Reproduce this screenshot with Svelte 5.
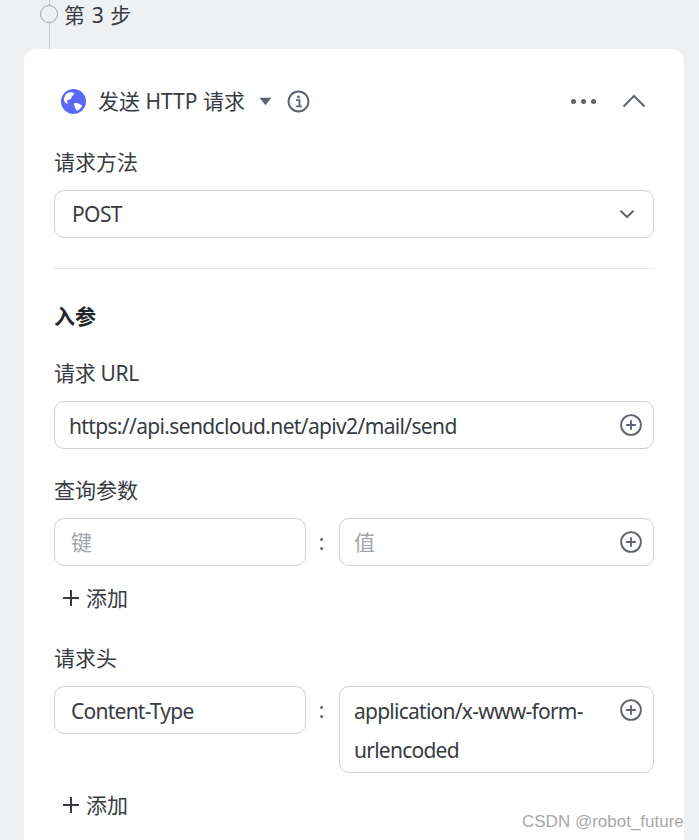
<script>
  const plus = 'M10 5.6v8.8M5.6 10h8.8';
</script>

<div class="page">
  <div class="step">
    <span class="rail"></span>
    <span class="node"></span>
    <span class="step-title">第 3 步</span>
  </div>

  <section class="card">
    <header class="head">
      <svg class="globe" viewBox="0 0 26 26" aria-hidden="true">
        <circle cx="13" cy="13" r="13" fill="#5a68f5" />
        <path d="M7 4c3-1 5.500-1 6.500.5.800 1.500-1 2-2 3-.8 1-.2 2-1.500 2.800-1.500.8-3 .3-3.500 2-.3 1.200 1 2.300.2 3.400C5 15 3 13.500 3 11 3.500 8 4.800 5.500 7 4z" fill="#fff" />
        <path d="M13.500 15c2-1 4-.5 5.500.5 1.500 1 2.500 1.300 3 2-1 2.300-2.800 4-5 5-1.500-.5-1.800-2-2.300-3.300-.5-1.500-2-2.800-1.200-4.200z" fill="#fff" />
      </svg>
      <span class="head-title">发送 HTTP 请求</span>
      <svg class="caret" viewBox="0 0 12 8" aria-hidden="true"><path d="M.5 0.500h11L6 7.500z" fill="#5f6470" /></svg>
      <svg class="info" viewBox="0 0 24 24" aria-hidden="true">
        <circle cx="12" cy="12" r="10.400" fill="none" stroke="#5f6470" stroke-width="2" />
        <circle cx="12" cy="7.200" r="1.500" fill="#5f6470" />
        <path d="M9.500 10.500H13v6M9.500 17h6" fill="none" stroke="#5f6470" stroke-width="1.900" />
      </svg>
      <span class="spacer"></span>
      <span class="dots"><i></i><i></i><i></i></span>
      <svg class="collapse" viewBox="0 0 24 14" aria-hidden="true">
        <path d="M1.500 12.500 12 2l10.500 10.500" fill="none" stroke="#5f6470" stroke-width="2" />
      </svg>
    </header>

    <div class="label first">请求方法</div>
    <div class="box select">
      <span>POST</span>
      <svg class="chev" viewBox="0 0 16 10" aria-hidden="true">
        <path d="M1.500 1.800 8 8l6.500-6.200" fill="none" stroke="#5f6470" stroke-width="2" />
      </svg>
    </div>

    <hr />

    <div class="section">入参</div>

    <div class="label url-label">请求 URL</div>
    <div class="box url">
      <span class="nudge">https://api.sendcloud.net/apiv2/mail/send</span>
      <svg class="add" viewBox="0 0 20 20" aria-hidden="true">
        <circle cx="10" cy="10" r="9" /><path d={plus} />
      </svg>
    </div>

    <div class="label query">查询参数</div>
    <div class="pair">
      <div class="box key placeholder">键</div>
      <span class="colon">:</span>
      <div class="box value placeholder">
        <span>值</span>
        <svg class="add" viewBox="0 0 20 20" aria-hidden="true">
          <circle cx="10" cy="10" r="9" /><path d={plus} />
        </svg>
      </div>
    </div>
    <div class="add-row">
      <svg class="plus" viewBox="0 0 18 18" aria-hidden="true"><path d="M9 1v16M1 9h16" /></svg>
      <span>添加</span>
    </div>

    <div class="label headers">请求头</div>
    <div class="pair">
      <div class="box key"><span class="nudge">Content-Type</span></div>
      <span class="colon">:</span>
      <div class="box value multi">
        <span class="multi-text">application/x-www-form-urlencoded</span>
        <svg class="add" viewBox="0 0 20 20" aria-hidden="true">
          <circle cx="10" cy="10" r="9" /><path d={plus} />
        </svg>
      </div>
    </div>
    <div class="add-row">
      <svg class="plus" viewBox="0 0 18 18" aria-hidden="true"><path d="M9 1v16M1 9h16" /></svg>
      <span>添加</span>
    </div>
  </section>

  <div class="watermark">CSDN @robot_future</div>
</div>

<style>
  :global(body) {
    margin: 0;
    background: #eff0f2;
  }

  .page {
    position: relative;
    width: 699px;
    height: 840px;
    overflow: hidden;
    box-sizing: border-box;
    padding: 0 15px 0 24px;
    font-family: "Noto Sans", "Noto Sans CJK SC", sans-serif;
    font-size: 21px;
    color: #383b42;
    background: #eff0f2;
  }

  .step {
    position: relative;
    height: 49px;
    display: flex;
    align-items: flex-start;
    box-sizing: border-box;
    padding: 1px 0 0 40px;
  }

  .rail {
    position: absolute;
    left: 25px;
    top: 0;
    bottom: 0;
    width: 1px;
    background: #c6c8cc;
  }

  .node {
    position: relative;
    width: 16px;
    height: 16px;
    margin: 4px 0 0 -24px;
    border: 1px solid #a3a6ad;
    border-radius: 50%;
    background: #eff0f2;
    flex: none;
  }

  .step-title {
    margin-left: 6px;
    line-height: 28px;
    letter-spacing: 0.6px;
  }

  .card {
    height: 800px;
    box-sizing: border-box;
    padding: 0 30px;
    border-radius: 12px 12px 0 0;
    background: #fff;
  }

  .head {
    display: flex;
    align-items: center;
    height: 28px;
    padding-top: 38px;
  }

  .globe {
    width: 25px;
    height: 25px;
    margin-left: 7px;
    flex: none;
  }

  .head-title {
    margin-left: 12px;
    line-height: 28px;
  }

  .caret {
    width: 13px;
    height: 9px;
    margin-left: 14px;
  }

  .info {
    width: 23px;
    height: 23px;
    margin-left: 15px;
  }

  .spacer {
    flex: 1;
  }

  .dots {
    display: flex;
    gap: 5px;
  }

  .dots i {
    display: block;
    width: 5px;
    height: 5px;
    border-radius: 50%;
    background: #5f6470;
  }

  .collapse {
    width: 24px;
    height: 14px;
    margin: 0 8px 0 26px;
  }

  .label {
    line-height: 28px;
  }

  .label.first {
    margin-top: 33px;
  }

  .box {
    box-sizing: border-box;
    border: 1px solid #cfd0d4;
    border-radius: 10px;
    background: #fff;
    line-height: 38px;
  }

  .select {
    height: 48px;
    margin-top: 14px;
    padding: 4px 17px;
    display: flex;
    align-items: center;
    justify-content: space-between;
    letter-spacing: -0.6px;
  }

  .chev {
    width: 16px;
    height: 10px;
    margin-right: 1px;
  }

  hr {
    margin: 30px 0 0;
    border: 0;
    border-top: 1px solid #e3e4e7;
  }

  .section {
    margin-top: 33px;
    line-height: 28px;
    font-weight: 700;
    color: #24262b;
  }

  .label.url-label {
    margin-top: 29px;
    letter-spacing: -0.3px;
  }

  .url {
    height: 48px;
    margin-top: 14px;
    padding: 4px 11px 4px 14px;
    display: flex;
    align-items: center;
    justify-content: space-between;
    letter-spacing: -0.65px;
  }

  .nudge {
    display: inline-block;
    transform: translateY(1px);
  }

  .add {
    width: 22px;
    height: 22px;
    flex: none;
  }

  .add circle,
  .add path {
    fill: none;
    stroke: #5f6470;
    stroke-width: 1.700;
  }

  .label.query {
    margin-top: 27px;
  }

  .label.headers {
    margin-top: 32px;
  }

  .pair {
    display: flex;
    align-items: flex-start;
    margin-top: 14px;
  }

  .key {
    width: 252px;
    height: 48px;
    padding: 4px 16px;
    flex: none;
    letter-spacing: -0.75px;
  }

  .colon {
    width: 31px;
    margin-right: 2px;
    flex: none;
    text-align: center;
    line-height: 48px;
    color: #5f6470;
  }

  .value {
    flex: 1;
    min-height: 48px;
    padding: 4px 11px 4px 14px;
    display: flex;
    align-items: center;
    justify-content: space-between;
  }

  .placeholder {
    color: #a2a5ab;
  }

  .multi {
    align-items: flex-start;
    height: 87px;
    padding-top: 5px;
    letter-spacing: -0.75px;
  }

  .multi .add {
    margin-top: 7px;
  }

  .multi-text {
    width: 240px;
    line-height: 39px;
  }

  .add-row {
    display: flex;
    align-items: center;
    margin: 18px 0 0 8px;
    line-height: 28px;
  }

  .plus {
    width: 18px;
    height: 18px;
    margin-right: 6px;
    fill: none;
    stroke: #383b42;
    stroke-width: 2;
  }

  .watermark {
    position: absolute;
    left: 522px;
    top: 810px;
    font-family: "Liberation Sans", sans-serif;
    font-size: 17px;
    line-height: 24px;
    color: #a8a8a8;
    white-space: nowrap;
  }
</style>
